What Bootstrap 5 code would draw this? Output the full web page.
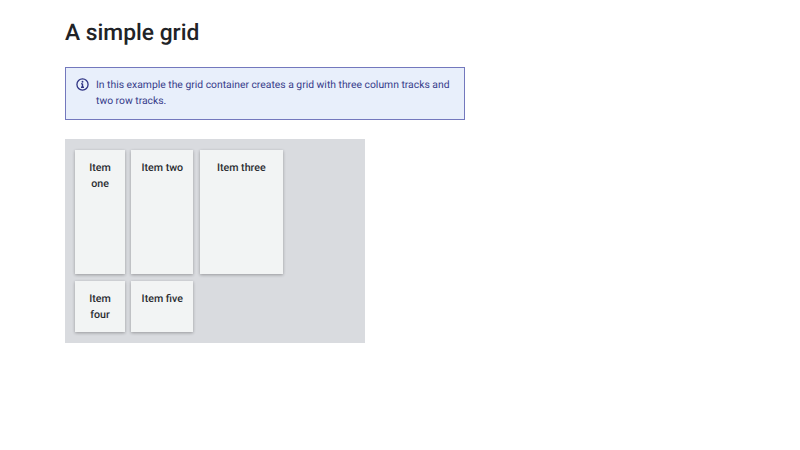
<!DOCTYPE html>
<html lang="en"><head><meta charset="utf-8">
<link href="https://cdn.jsdelivr.net/npm/bootstrap@5.3.0/dist/css/bootstrap.min.css" rel="stylesheet">
<style>
body{font-family:Roboto,sans-serif;background:#fff;color:#15171a;text-rendering:geometricPrecision}
.page-wrap{padding:16px 65px 0}
.page-title{font-family:Roboto,sans-serif;font-size:22.8px;font-weight:500;line-height:34px;color:#212327;margin:0 0 17px}
.note-box{width:400px;height:53px;background:#e8effb;border:1px solid #7378bd;color:#363b8a;font-size:10.35px;line-height:16px;padding:9px 10px}
.note-icon{flex:0 0 13px;width:13px;height:13px;margin-right:7px;margin-top:1px}
.grid-demo{display:grid;width:300px;height:204px;margin-top:19px;padding:10.5px 10px 10px;column-gap:6.3px;row-gap:6.5px;background:#d9dbdf;grid-template-columns:50px 62px 83.4px;grid-template-rows:124.5px 51px}
.grid-cell{background:#f2f4f4;box-shadow:0 1px 3px rgba(0,0,0,.3);text-align:center;font-size:10.67px;font-weight:500;line-height:16px;padding:10px 8px;color:#2b2d31}
</style></head><body>
<div class="page-wrap">
<h1 class="page-title">A simple grid</h1>
<div class="note-box d-flex">
<svg class="note-icon" viewBox="0 0 14 14" fill="none" stroke="#2f3484"><circle cx="7" cy="7" r="6" stroke-width="1.4"/><path d="M7 6.2v3.6M5.4 10h3.2M5.6 6.2H7" stroke-width="1.5"/><circle cx="7" cy="4" r="1" fill="#2f3484" stroke="none"/></svg>
<div>In this example the grid container creates a grid with three column tracks and two row tracks.</div>
</div>
<div class="grid-demo">
<div class="grid-cell">Item one</div><div class="grid-cell">Item two</div><div class="grid-cell">Item three</div><div class="grid-cell">Item four</div><div class="grid-cell">Item five</div>
</div>
</div>
<script src="https://cdn.jsdelivr.net/npm/bootstrap@5.3.0/dist/js/bootstrap.bundle.min.js"></script>
</body></html>
